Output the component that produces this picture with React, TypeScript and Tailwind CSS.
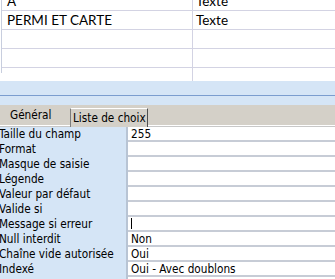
import React from 'react';

const gridRows = [
    { name: 'A', type: 'Texte' },
    { name: 'PERMI ET CARTE', type: 'Texte' },
    { name: '', type: '' },
    { name: '', type: '' },
    { name: '', type: '' },
];

const props = [
    { label: 'Taille du champ', value: '255' },
    { label: 'Format', value: '' },
    { label: 'Masque de saisie', value: '' },
    { label: 'Légende', value: '' },
    { label: 'Valeur par défaut', value: '' },
    { label: 'Valide si', value: '' },
    { label: 'Message si erreur', value: '', cursor: true },
    { label: 'Null interdit', value: 'Non' },
    { label: 'Chaîne vide autorisée', value: 'Oui' },
    { label: 'Indexé', value: 'Oui - Avec doublons' },
    { label: '', value: '' },
];

export default function App() {
    return (
        <div className="w-[335px] h-[279px] overflow-hidden bg-white">
            {/* Table design grid */}
            <div className="h-[81px] overflow-hidden pl-[1px] font-['Lato',sans-serif] text-[13.5px] text-black">
                <div className="border-l border-[#c8cede] h-full -mt-[8px]">
                    {gridRows.map((row, i) => (
                        <div key={i} className="flex h-[19px] border-b border-[#d3d3e3]">
                            <div className="w-[191px] border-r border-[#d3d3e3] pl-[5px] leading-[18px]">{row.name}</div>
                            <div className="flex-1 pl-[3px] leading-[18px]">{row.type}</div>
                        </div>
                    ))}
                </div>
            </div>

            {/* Splitter */}
            <div className="h-[14px] bg-[#d5e5f6]" />
            <div className="h-[1px] bg-[#7b9dcf]" />
            <div className="h-[9px] bg-[#d5e5f6]" />

            {/* Tabs */}
            <div className="font-['DejaVu_Sans_Condensed','DejaVu_Sans',sans-serif] text-[11.7px] text-black">
                <div className="h-[20px] bg-[#d4d0c8] flex items-end">
                    <div className="w-[70px] h-[20px] pl-[10px] leading-[20px] whitespace-nowrap">Général</div>
                    <div className="w-[78px] h-[19px] mb-[-2px] border border-b-0 border-t-white border-l-[#7d7d7d] border-r-[#505050] bg-[#d4d0c8] pl-[2px] leading-[18px] whitespace-nowrap relative z-10">
                        Liste de choix
                    </div>
                </div>
                <div className="h-[1px] bg-white" />
                <div className="h-[1px] bg-[#c8c8c8]" />

                {/* Property sheet */}
                {props.map((p, i) => (
                    <div key={i} className="flex h-[15px]">
                        <div className="w-[127px] bg-[#d5e5f6] -ml-[1px] leading-[14px] whitespace-nowrap">{p.label}</div>
                        <div className="w-[2px] bg-[#b8c4d4]" />
                        <div className="flex-1 pl-[3px] leading-[14px] border-b-2 border-[#c7ccd6] flex items-center whitespace-nowrap">
                            {p.cursor ? <span className="inline-block w-[1px] h-[11px] bg-black" /> : p.value}
                        </div>
                    </div>
                ))}
            </div>
        </div>
    );
}
